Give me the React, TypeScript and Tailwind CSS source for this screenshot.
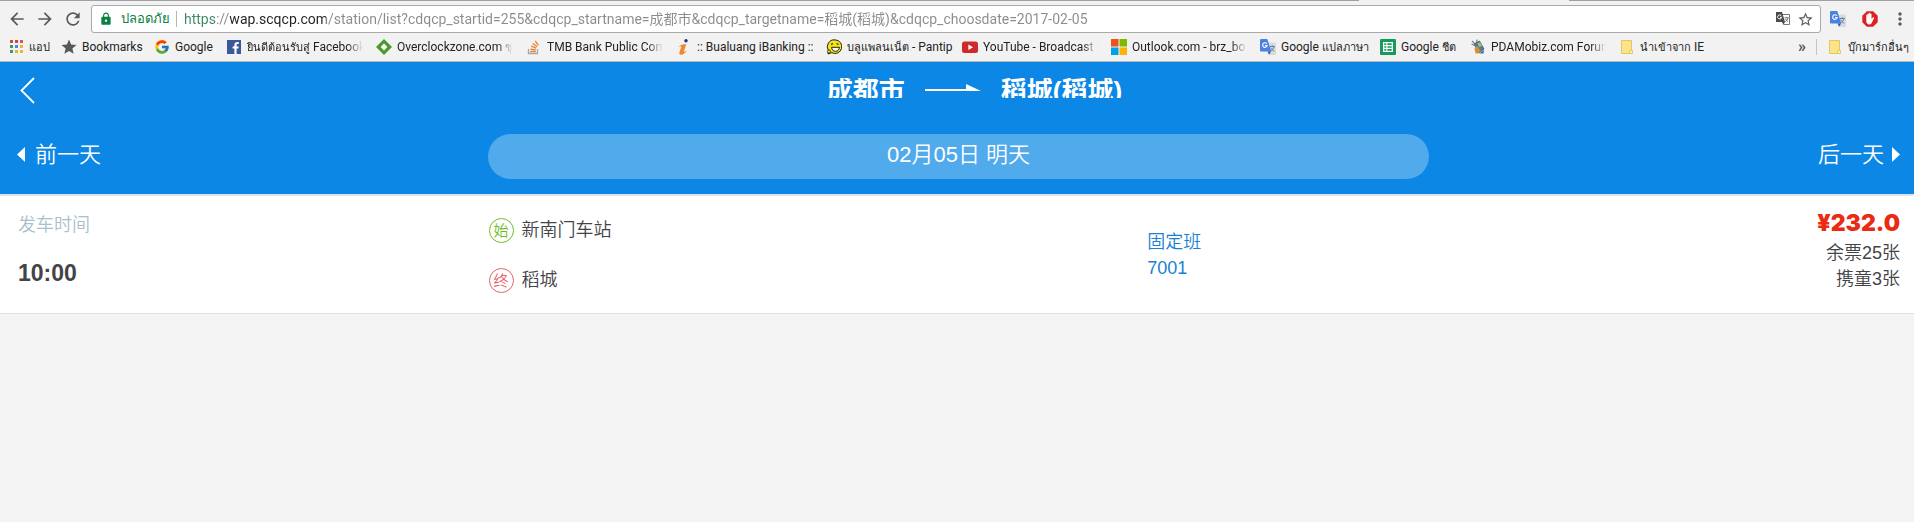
import type { ReactNode } from "react";
import { FcGoogle } from "react-icons/fc";
import { MdArrowBack, MdArrowForward, MdLock, MdMoreVert, MdRefresh, MdStar, MdStarBorder } from "react-icons/md";

const URL_TEXT =
  "https://wap.scqcp.com/station/list?cdqcp_startid=255&cdqcp_startname=成都市&cdqcp_targetname=稻城(稻城)&cdqcp_choosdate=2017-02-05";

function AppsIcon() {
  const colors = ["#db4437", "#db4437", "#e2574c", "#3d9b5b", "#4a86e8", "#f0b429", "#3d9b5b", "#e8b03a", "#f0b429"];
  return (
    <svg viewBox="0 0 16 16" className="size-4">
      {colors.map((c, i) => (
        <rect key={i} x={2 + (i % 3) * 5} y={1 + Math.floor(i / 3) * 5} width="3" height="3" fill={c} />
      ))}
    </svg>
  );
}

function FacebookIcon() {
  return (
    <svg viewBox="0 0 16 16" className="size-4">
      <rect x="1" y="1" width="14" height="14" fill="#3b5998" />
      <path d="M8.4 15V9.6H6.6V7.4h1.8V5.8c0-1.9 1.1-2.9 2.8-2.9.8 0 1.4.1 1.6.1v2h-1.1c-.9 0-1.1.4-1.1 1.1v1.3h2.1l-.3 2.2h-1.8V15z" fill="#fff" />
    </svg>
  );
}

function DiamondIcon() {
  return (
    <svg viewBox="0 0 16 16" className="size-4">
      <path d="M8 0l8 8-8 8-8-8z" fill="#4a9a2c" />
      <path d="M8 4.6L11.4 8 8 11.4 4.6 8z" fill="#fff" />
    </svg>
  );
}

function StackIcon() {
  return (
    <svg viewBox="0 0 16 16" className="size-4" fill="none">
      <path d="M2.500 10v4.500h9V10" stroke="#a5a7aa" strokeWidth="1.300" />
      <path d="M4.300 12.500h5.400M4.400 10.100l5.400.8M5.100 7.200l5.100 2M6.700 4.400l4.400 3.300M9.300 1.800l3 4.500" stroke="#ee8233" strokeWidth="1.300" />
    </svg>
  );
}

function BualuangIcon() {
  return (
    <svg viewBox="0 0 16 16" className="size-4">
      <circle cx="10" cy="1.800" r="1.700" fill="#272a7c" />
      <path d="M2.500 7.400C5 5.600 7.500 5.100 10.300 5.200L7.900 12.200c-.3 1.100.8.8 3-.9-1.700 3-4 4.700-6 4.500-1.800-.2-1.900-1.500-1.300-3.100L5.400 7.500z" fill="#f0882a" />
    </svg>
  );
}

function PantipIcon() {
  return (
    <svg viewBox="0 0 16 16" className="size-4">
      <path d="M9 .9a6.800 6.800 0 1 1-3.200 12.800L2 15l.6-3.200A6.900 6.900 0 0 1 9 .9z" fill="#f7e516" stroke="#222" strokeWidth="1" />
      <path d="M5 5.500l2-1M10.500 4.500l2 1" stroke="#222" strokeWidth="1.200" />
      <path d="M5.500 8.300h8c-.4 2.600-1.800 4-4 4s-3.600-1.400-4-4z" fill="#fff" stroke="#222" strokeWidth="1" />
      <circle cx="3" cy="12.500" r="1.600" fill="#f7e516" stroke="#222" strokeWidth=".8" />
    </svg>
  );
}

function YoutubeIcon() {
  return (
    <svg viewBox="0 0 16 16" className="size-4">
      <rect x="0" y="2.500" width="16" height="11.500" rx="2.500" fill="#cf2a27" />
      <path d="M6.400 5.500v5.400L11 8.200z" fill="#fff" />
    </svg>
  );
}

function MicrosoftIcon() {
  return (
    <svg viewBox="0 0 16 16" className="size-4">
      <path d="M0 0h7.500v7.500H0z" fill="#f1511b" />
      <path d="M8.500 0H16v7.500H8.500z" fill="#80b900" />
      <path d="M0 8.500h7.500V16H0z" fill="#00a2ed" />
      <path d="M8.500 8.500H16V16H8.500z" fill="#fbb405" />
    </svg>
  );
}

function TranslateIcon() {
  return (
    <svg viewBox="0 0 16 16" className="size-4">
      <path d="M6 3.500h9a1 1 0 0 1 1 1V15a1 1 0 0 1-1 1H9z" fill="#d9dadc" />
      <path d="M9.800 7.500h5M12.300 6.300v1.200M14 7.500c-.5 2.200-2 3.800-3.600 4.700M10.700 8.700c.7 1.500 2 2.800 3.600 3.500" stroke="#5b7fa6" strokeWidth="1" fill="none" />
      <path d="M1 0h6.300l3.900 12.500H1a1 1 0 0 1-1-1V1a1 1 0 0 1 1-1z" fill="#4a82e4" />
      <path d="M7.600 12.500h3.600L9 15.800z" fill="#3457b8" />
      <path d="M6.800 4.700A2.300 2.300 0 1 0 7.200 6.500H5" stroke="#fff" strokeWidth="1.100" fill="none" />
    </svg>
  );
}

function PageTranslateIcon() {
  return (
    <svg viewBox="0 0 16 16" className="size-4">
      <path d="M6.500 3.500h8v10h-6" stroke="#7a7a7a" strokeWidth="1" fill="#fff" />
      <path d="M9.600 6.800h4M11.600 5.800v1M13 6.800c-.4 1.800-1.500 3-2.800 3.800M10.300 7.800c.6 1.200 1.600 2.200 2.800 2.700" stroke="#6a6a6a" strokeWidth=".9" fill="none" />
      <path d="M1 1h6l3 10H1z" fill="#4c4c4c" />
      <path d="M7 11h3l-1.700 2.800z" fill="#4c4c4c" />
      <path d="M6.300 4.800A2 2 0 1 0 6.600 6.400H5" stroke="#fff" strokeWidth="1" fill="none" />
    </svg>
  );
}

function SheetsIcon() {
  return (
    <svg viewBox="0 0 16 16" className="size-4">
      <rect width="16" height="16" rx="1" fill="#169c5a" />
      <path d="M3 3h10v10H3z" fill="#fff" />
      <path d="M4.300 4.300h2v1.600h-2zM7.400 4.300h4.300v1.600H7.400zM4.300 7.200h2v1.600h-2zM7.400 7.200h4.300v1.600H7.400zM4.300 10.100h2v1.600h-2zM7.400 10.100h4.300v1.600H7.400z" fill="#169c5a" />
    </svg>
  );
}

function PdaIcon() {
  return (
    <svg viewBox="0 0 16 16" className="size-4">
      <path d="M2 2l2.500 2.500M1.500 5l3 1.500M7 .5l-.5 3" stroke="#7d858c" strokeWidth="1.300" />
      <path d="M4 5l5.500-3 4.500 8-5 4z" fill="#4b7f9c" stroke="#4a545e" strokeWidth=".8" />
      <path d="M7.500 4.500l2.500-1.200 2 3.500-2.500 1.400z" fill="#9fc574" />
      <path d="M4.500 9l3-2 3 5-2.500 2.500H5.500z" fill="#e08a3a" />
      <path d="M9.500 14.500l4.500-3.500-.5 3.500z" fill="#3568a8" />
    </svg>
  );
}

function FolderIcon() {
  return (
    <svg viewBox="0 0 16 16" className="size-4">
      <path d="M2.500 1.500h10v13h-10z" fill="#fce48c" stroke="#e9c55c" strokeWidth="1" />
      <path d="M10.500 11.500h3v3h-3z" fill="#fff0a8" stroke="#e9c55c" strokeWidth="1" />
    </svg>
  );
}

function BlockIcon() {
  return (
    <svg viewBox="0 0 16 16" className="size-4">
      <path d="M4.900.3h6.200l4.600 4.500v6.400l-4.600 4.500H4.900L.3 11.200V4.800z" fill="#e01f1f" />
      <path d="M4.300 7.500V4.200c0-.8 1.200-.8 1.200 0V3c0-.8 1.300-.8 1.300 0v-.6c0-.9 1.400-.9 1.400 0V3c0-.8 1.300-.8 1.300 0v5l1.400-1.500c.6-.5 1.500 0 1.100.7l-2.200 4.600c-.5 1-1.200 1.700-2.500 1.700-2 0-3-1.500-3-3.200z" fill="#fff" />
    </svg>
  );
}

type Bookmark = { icon: ReactNode; label: ReactNode; width: string; fade?: boolean };

/* Thai glyphs run large next to the Latin face, so they are set one step smaller. */
function Thai({ children }: { children: string }) {
  return <span className="text-[11px]">{children}</span>;
}

const bookmarks: Bookmark[] = [
  { icon: <AppsIcon />, label: <Thai>แอป</Thai>, width: "w-[19px]" },
  { icon: <MdStar className="size-[18px] shrink-0 text-[#57585a]" />, label: "Bookmarks", width: "w-[59px]" },
  { icon: <FcGoogle className="size-4" />, label: "Google", width: "w-[38px]" },
  { icon: <FacebookIcon />, label: <><Thai>ยินดีต้อนรับสู่</Thai> Facebook</>, width: "w-[116px]", fade: true },
  { icon: <DiamondIcon />, label: <>Overclockzone.com <Thai>ชุ</Thai></>, width: "w-[116px]", fade: true },
  { icon: <StackIcon />, label: "TMB Bank Public Com", width: "w-[116px]", fade: true },
  { icon: <BualuangIcon />, label: ":: Bualuang iBanking ::", width: "w-[116px]" },
  { icon: <PantipIcon />, label: <><Thai>บลูแพลนเน็ต</Thai> - Pantip</>, width: "w-[102px]" },
  { icon: <YoutubeIcon />, label: "YouTube - Broadcast Y", width: "w-[115px]", fade: true },
  { icon: <MicrosoftIcon />, label: "Outlook.com - brz_bo", width: "w-[115px]", fade: true },
  { icon: <TranslateIcon />, label: <>Google <Thai>แปลภาษา</Thai></>, width: "w-[86px]" },
  { icon: <SheetsIcon />, label: <>Google <Thai>ชีต</Thai></>, width: "w-[56px]" },
  { icon: <PdaIcon />, label: "PDAMobiz.com Forum", width: "w-[115px]", fade: true },
  { icon: <FolderIcon />, label: <><Thai>นำเข้าจาก</Thai> IE</>, width: "w-[62px]" },
];

function BookmarkLink({ icon, label, width, fade }: Bookmark) {
  return (
    <a href="#" className="flex shrink-0 items-center gap-[5px]">
      <span className="flex size-4 shrink-0 items-center justify-center">{icon}</span>
      <span
        className={`${width} whitespace-nowrap ${
          fade ? "overflow-hidden [mask-image:linear-gradient(to_right,black_calc(100%-16px),transparent)]" : ""
        }`}
      >
        {label}
      </span>
    </a>
  );
}

function BrowserBar() {
  return (
    <div className="border-b border-[#b9b9b9] bg-[#f2f2f2] font-['Roboto','Noto_Sans','Noto_Sans_CJK_SC',sans-serif]">
      <div className="flex h-px">
        <div className="w-[71%] bg-[#a3a0a3]" />
        <div className="grow" />
        <div className="w-[18%] bg-[#a3a0a3]" />
      </div>
      <div className="flex items-center pt-1 pr-1 pl-[7px] text-[#5a5a5a]">
        <div className="flex gap-2">
          <button aria-label="Back" className="flex size-5 items-center justify-center"><MdArrowBack className="size-5" /></button>
          <button aria-label="Forward" className="flex size-5 items-center justify-center"><MdArrowForward className="size-5" /></button>
          <button aria-label="Reload" className="flex size-5 items-center justify-center"><MdRefresh className="size-5" /></button>
        </div>
        <div className="ml-2 flex h-7 grow items-center rounded-[3px] border border-[#a9a9a9] bg-white pr-1.5 pl-[7px]">
          <MdLock className="size-3.5 text-[#0b8043]" />
          <label htmlFor="address" className="ml-2 w-[47px] text-[13px] whitespace-nowrap text-[#0b8043]">ปลอดภัย</label>
          <div className="mr-[7px] ml-2 h-4 w-px bg-[#b5b5b5]" />
          <input
            id="address"
            defaultValue={URL_TEXT}
            spellCheck={false}
            className="min-w-0 grow bg-[linear-gradient(to_right,#3c8a63_33px,#8b8b8b_33px,#8b8b8b_46px,#222_46px,#222_142px,#8b8b8b_142px)] bg-clip-text text-sm text-transparent outline-none"
          />
          <button aria-label="Translate page"><PageTranslateIcon /></button>
          <button aria-label="Bookmark page" className="ml-1.5"><MdStarBorder className="size-[17px]" /></button>
        </div>
        <button aria-label="Google Translate" className="ml-[9px]"><TranslateIcon /></button>
        <button aria-label="Ad blocker" className="ml-4"><BlockIcon /></button>
        <button aria-label="Menu" className="ml-3"><MdMoreVert className="size-5" /></button>
      </div>
      <nav aria-label="Bookmarks" className="flex h-7 items-center justify-between pr-2.5 pl-2 text-xs text-[#222]">
        <div className="flex items-center gap-[13px]">
          {bookmarks.map((b, i) => (
            <BookmarkLink key={i} {...b} />
          ))}
        </div>
        <div className="flex items-center">
          <button aria-label="More bookmarks" className="text-base font-bold text-[#555]">»</button>
          <div className="mr-2.5 ml-2.5 h-4 w-px bg-[#c5c5c5]" />
          <BookmarkLink icon={<FolderIcon />} label={<Thai>บุ๊กมาร์กอื่นๆ</Thai>} width="w-[56px]" />
        </div>
      </nav>
    </div>
  );
}

function StationBadge({ text, color }: { text: string; color: string }) {
  return (
    <span className={`flex size-[25px] items-center justify-center rounded-full border text-[15px] leading-none ${color}`}>
      {text}
    </span>
  );
}

function TripHeader() {
  return (
    <header className="border-b-2 border-[#dde6ee] bg-[#0c87e6] pb-[15px] font-[350] text-white">
      <div className="flex h-14 items-center">
        <a href="#" aria-label="Back" className="pl-5">
          <svg viewBox="0 0 15 27" className="h-[27px] w-[15px]" fill="none">
            <path d="M14 1L1.500 13.500 14 26" stroke="#fff" strokeWidth="1.800" />
          </svg>
        </a>
        <h1 className="mb-1 flex h-5 grow items-start justify-center gap-5 overflow-hidden text-[26px] leading-[26px] font-bold">
          <span>成都市</span>
          <svg viewBox="0 0 56 20" className="h-5 w-14" fill="#fff">
            <path d="M0 11h41V6l15 7H0z" />
          </svg>
          <span>稻城(稻城)</span>
        </h1>
      </div>
      <div className="grid grid-cols-[1fr_2fr_1fr] items-center pt-4 pr-3.5 pl-[17px] text-[22px] leading-[26px]">
        <a href="#" className="mb-1 flex items-center gap-2.5">
          <svg viewBox="0 0 8 15" className="h-[15px] w-2" fill="#fff"><path d="M8 0v15L0 7.500z" /></svg>
          <span>前一天</span>
        </a>
        <button className="flex h-[45px] items-center justify-center rounded-full bg-[#50aaec] pb-1">02月05日 明天</button>
        <a href="#" className="mb-1 flex items-center justify-end gap-2">
          <span>后一天</span>
          <svg viewBox="0 0 8 15" className="h-[15px] w-2" fill="#fff"><path d="M0 0v15l8-7.500z" /></svg>
        </a>
      </div>
    </header>
  );
}

function TripCard() {
  return (
    <a
      href="#"
      className="grid grid-cols-[25fr_35fr_40fr] items-start border-b border-[#e0e0e0] bg-white pr-3.5 pb-5 pl-[18px] text-lg leading-[26px] font-[350] text-[#434348]"
    >
      <div className="pt-4">
        <div className="text-[#a9bfcc]">发车时间</div>
        <div className="mt-5 text-[23px] leading-[30px] font-bold">10:00</div>
      </div>
      <div className="flex flex-col gap-[25px] pt-[22px] leading-[25px]">
        <div className="flex items-center gap-2">
          <StationBadge text="始" color="border-[#6fbf22] text-[#6fbf22]" />
          新南门车站
        </div>
        <div className="flex items-center gap-2">
          <StationBadge text="终" color="border-[#e36464] text-[#e36464]" />
          稻城
        </div>
      </div>
      <div className="flex justify-between">
        <div className="pt-[33px] text-[#1a82d2]">
          <div>固定班</div>
          <div>7001</div>
        </div>
        <div className="pt-3 text-right">
          <div className="mb-0.5 font-['Inter','Liberation_Sans',sans-serif] text-[23px] leading-[30px] font-black text-[#ea2b12]">¥232.0</div>
          <div>余票25张</div>
          <div>携童3张</div>
        </div>
      </div>
    </a>
  );
}

export default function App() {
  return (
    <div className="min-h-screen bg-[#f4f4f4] font-['Liberation_Sans','Noto_Sans_CJK_SC',sans-serif]">
      <BrowserBar />
      <TripHeader />
      <main>
        <TripCard />
      </main>
    </div>
  );
}
